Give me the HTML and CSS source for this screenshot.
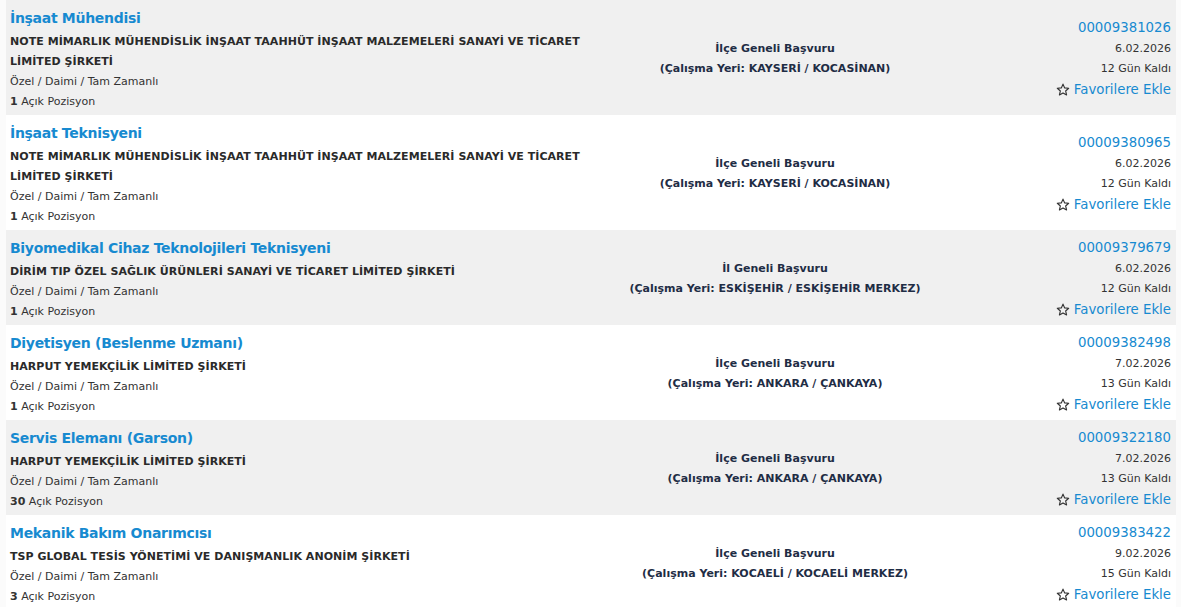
FILE: index.html
```html
<!DOCTYPE html>
<html lang="tr">
<head>
<meta charset="utf-8">
<title>İlanlar</title>
<link rel="stylesheet" href="styles.css">
</head>
<body>
<div class="list">
  <div class="item alt">
    <div class="col-main">
      <a class="title" href="#">İnşaat Mühendisi</a>
      <div class="company">NOTE MİMARLIK MÜHENDİSLİK İNŞAAT TAAHHÜT İNŞAAT MALZEMELERİ SANAYİ VE TİCARET LİMİTED ŞİRKETİ</div>
      <div class="meta">Özel / Daimi / Tam Zamanlı</div>
      <div class="meta"><b>1</b> Açık Pozisyon</div>
    </div>
    <div class="col-loc">
      <div>İlçe Geneli Başvuru</div>
      <div>(Çalışma Yeri: KAYSERİ / KOCASİNAN)</div>
    </div>
    <div class="col-right">
      <a class="no" href="#">00009381026</a>
      <div>6.02.2026</div>
      <div>12 Gün Kaldı</div>
      <a class="fav" href="#"><svg viewBox="0 0 16 16" width="14" height="14"><path d="M8 1.3l1.9 4.3 4.6.4-3.5 3.1 1.1 4.6L8 11.3l-4.1 2.4 1.1-4.6L1.5 6l4.6-.4z" fill="none" stroke="#333" stroke-width="1.3" stroke-linejoin="round"/></svg>Favorilere Ekle</a>
    </div>
  </div>
  <div class="item">
    <div class="col-main">
      <a class="title" href="#">İnşaat Teknisyeni</a>
      <div class="company">NOTE MİMARLIK MÜHENDİSLİK İNŞAAT TAAHHÜT İNŞAAT MALZEMELERİ SANAYİ VE TİCARET LİMİTED ŞİRKETİ</div>
      <div class="meta">Özel / Daimi / Tam Zamanlı</div>
      <div class="meta"><b>1</b> Açık Pozisyon</div>
    </div>
    <div class="col-loc">
      <div>İlçe Geneli Başvuru</div>
      <div>(Çalışma Yeri: KAYSERİ / KOCASİNAN)</div>
    </div>
    <div class="col-right">
      <a class="no" href="#">00009380965</a>
      <div>6.02.2026</div>
      <div>12 Gün Kaldı</div>
      <a class="fav" href="#"><svg viewBox="0 0 16 16" width="14" height="14"><path d="M8 1.3l1.9 4.3 4.6.4-3.5 3.1 1.1 4.6L8 11.3l-4.1 2.4 1.1-4.6L1.5 6l4.6-.4z" fill="none" stroke="#333" stroke-width="1.3" stroke-linejoin="round"/></svg>Favorilere Ekle</a>
    </div>
  </div>
  <div class="item alt">
    <div class="col-main">
      <a class="title" href="#">Biyomedikal Cihaz Teknolojileri Teknisyeni</a>
      <div class="company">DİRİM TIP ÖZEL SAĞLIK ÜRÜNLERİ SANAYİ VE TİCARET LİMİTED ŞİRKETİ</div>
      <div class="meta">Özel / Daimi / Tam Zamanlı</div>
      <div class="meta"><b>1</b> Açık Pozisyon</div>
    </div>
    <div class="col-loc">
      <div>İl Geneli Başvuru</div>
      <div>(Çalışma Yeri: ESKİŞEHİR / ESKİŞEHİR MERKEZ)</div>
    </div>
    <div class="col-right">
      <a class="no" href="#">00009379679</a>
      <div>6.02.2026</div>
      <div>12 Gün Kaldı</div>
      <a class="fav" href="#"><svg viewBox="0 0 16 16" width="14" height="14"><path d="M8 1.3l1.9 4.3 4.6.4-3.5 3.1 1.1 4.6L8 11.3l-4.1 2.4 1.1-4.6L1.5 6l4.6-.4z" fill="none" stroke="#333" stroke-width="1.3" stroke-linejoin="round"/></svg>Favorilere Ekle</a>
    </div>
  </div>
  <div class="item">
    <div class="col-main">
      <a class="title" href="#">Diyetisyen (Beslenme Uzmanı)</a>
      <div class="company">HARPUT YEMEKÇİLİK LİMİTED ŞİRKETİ</div>
      <div class="meta">Özel / Daimi / Tam Zamanlı</div>
      <div class="meta"><b>1</b> Açık Pozisyon</div>
    </div>
    <div class="col-loc">
      <div>İlçe Geneli Başvuru</div>
      <div>(Çalışma Yeri: ANKARA / ÇANKAYA)</div>
    </div>
    <div class="col-right">
      <a class="no" href="#">00009382498</a>
      <div>7.02.2026</div>
      <div>13 Gün Kaldı</div>
      <a class="fav" href="#"><svg viewBox="0 0 16 16" width="14" height="14"><path d="M8 1.3l1.9 4.3 4.6.4-3.5 3.1 1.1 4.6L8 11.3l-4.1 2.4 1.1-4.6L1.5 6l4.6-.4z" fill="none" stroke="#333" stroke-width="1.3" stroke-linejoin="round"/></svg>Favorilere Ekle</a>
    </div>
  </div>
  <div class="item alt">
    <div class="col-main">
      <a class="title" href="#">Servis Elemanı (Garson)</a>
      <div class="company">HARPUT YEMEKÇİLİK LİMİTED ŞİRKETİ</div>
      <div class="meta">Özel / Daimi / Tam Zamanlı</div>
      <div class="meta"><b>30</b> Açık Pozisyon</div>
    </div>
    <div class="col-loc">
      <div>İlçe Geneli Başvuru</div>
      <div>(Çalışma Yeri: ANKARA / ÇANKAYA)</div>
    </div>
    <div class="col-right">
      <a class="no" href="#">00009322180</a>
      <div>7.02.2026</div>
      <div>13 Gün Kaldı</div>
      <a class="fav" href="#"><svg viewBox="0 0 16 16" width="14" height="14"><path d="M8 1.3l1.9 4.3 4.6.4-3.5 3.1 1.1 4.6L8 11.3l-4.1 2.4 1.1-4.6L1.5 6l4.6-.4z" fill="none" stroke="#333" stroke-width="1.3" stroke-linejoin="round"/></svg>Favorilere Ekle</a>
    </div>
  </div>
  <div class="item">
    <div class="col-main">
      <a class="title" href="#">Mekanik Bakım Onarımcısı</a>
      <div class="company">TSP GLOBAL TESİS YÖNETİMİ VE DANIŞMANLIK ANONİM ŞİRKETİ</div>
      <div class="meta">Özel / Daimi / Tam Zamanlı</div>
      <div class="meta"><b>3</b> Açık Pozisyon</div>
    </div>
    <div class="col-loc">
      <div>İlçe Geneli Başvuru</div>
      <div>(Çalışma Yeri: KOCAELİ / KOCAELİ MERKEZ)</div>
    </div>
    <div class="col-right">
      <a class="no" href="#">00009383422</a>
      <div>9.02.2026</div>
      <div>15 Gün Kaldı</div>
      <a class="fav" href="#"><svg viewBox="0 0 16 16" width="14" height="14"><path d="M8 1.3l1.9 4.3 4.6.4-3.5 3.1 1.1 4.6L8 11.3l-4.1 2.4 1.1-4.6L1.5 6l4.6-.4z" fill="none" stroke="#333" stroke-width="1.3" stroke-linejoin="round"/></svg>Favorilere Ekle</a>
    </div>
  </div>
</div>
</body>
</html>
```

FILE: styles.css
```css
html, body {
  margin: 0;
  padding: 0;
}
body {
  background: #fbfbfb;
  font-family: "DejaVu Sans", Verdana, sans-serif;
  font-size: 11px;
  color: #333;
}
a {
  text-decoration: none;
}
.list {
  margin: 0 5px 0 6px;
  display: flex;
  flex-direction: column;
}
.item {
  display: flex;
  background: #fff;
  padding: 5px 5px 3px 4px;
}
.item.alt {
  background: #f0f0f0;
}
.col-main {
  width: 590px;
  display: flex;
  flex-direction: column;
}
.title {
  color: #178ad0;
  font-weight: bold;
  font-size: 14px;
  letter-spacing: -0.3px;
  line-height: 26px;
  margin-bottom: 1px;
}
.company {
  font-weight: bold;
  color: #2a2a2a;
  line-height: 20px;
  letter-spacing: 0.05px;
}
.meta {
  line-height: 20px;
}
.col-loc {
  flex: 1;
  display: flex;
  flex-direction: column;
  justify-content: center;
  align-items: center;
  text-align: center;
  font-weight: bold;
  color: #1f2d45;
  line-height: 20px;
}
.col-right {
  width: 221px;
  display: flex;
  flex-direction: column;
  justify-content: center;
  align-items: flex-end;
  line-height: 20px;
}
.no {
  color: #178ad0;
  font-size: 13.3px;
  line-height: 22px;
}
.fav {
  color: #178ad0;
  font-size: 13.3px;
  display: flex;
  align-items: center;
  gap: 4px;
  margin-top: 1px;
}
.fav svg {
  display: block;
}
```
